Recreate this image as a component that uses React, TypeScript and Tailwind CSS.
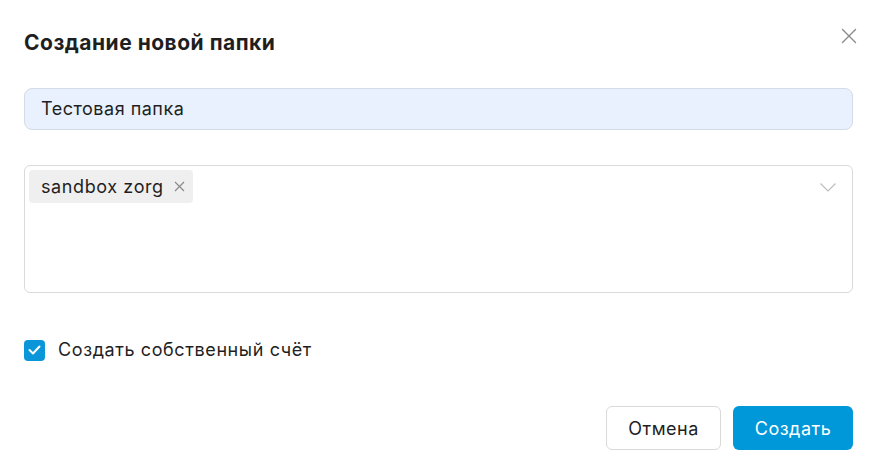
import { useState } from "react"

const font = { fontFamily: "Inter, 'Noto Sans', sans-serif" }

export default function App() {
  const [checked, setChecked] = useState(true)

  return (
    <div className="w-[883px] h-[474px] bg-white text-[#1f1f1f]" style={font}>
      <div className="pl-6 pr-[30px]">
        <div className="flex justify-between items-start pt-[28px]">
          <h2 className="mt-[3px] text-[21px] leading-[24px] font-bold tracking-[0.5px]">Создание новой папки</h2>
          <button className="-mr-[4px] text-[#8a8a8a]">
            <svg width="16" height="16" viewBox="0 0 16 16" fill="none" stroke="currentColor" strokeWidth="1.4" strokeLinecap="round">
              <path d="M1.5 1.5l13 13M14.5 1.5l-13 13" />
            </svg>
          </button>
        </div>

        <div className="mt-[33px] h-[42px] rounded-lg border border-[#d3dbe6] bg-[#e8f1fd] flex items-center px-4">
          <span className="text-[18px] leading-none tracking-[0.5px]">Тестовая папка</span>
        </div>

        <div className="mt-[35px] h-[128px] rounded-md border border-[#dadada] p-1 flex items-start justify-between">
          <div className="h-[33px] rounded bg-[#efefef] flex items-center pl-3 pr-2 gap-[10px]">
            <span className="text-[18px] leading-none tracking-[0.6px]">sandbox zorg</span>
            <svg width="11" height="11" viewBox="0 0 11 11" fill="none" stroke="#8a8a8a" strokeWidth="1.2">
              <path d="M1 1l9 9M10 1l-9 9" />
            </svg>
          </div>
          <svg className="mt-[13px] mr-[12px]" width="16" height="9" viewBox="0 0 16 9" fill="none" stroke="#bdbdbd" strokeWidth="1.2">
            <path d="M0.5 0.5l7.5 7.5 7.5-7.5" />
          </svg>
        </div>

        <label className="mt-[46px] flex items-center gap-[13px] h-[22px] cursor-pointer">
          <span
            onClick={() => setChecked(!checked)}
            className="w-[21px] h-[21px] rounded bg-[#0a96d8] flex items-center justify-center"
          >
            {checked && (
              <svg width="13" height="10" viewBox="0 0 13 10" fill="none" stroke="white" strokeWidth="2" strokeLinecap="round" strokeLinejoin="round">
                <path d="M1.5 5l3.5 3.5 6.5-7" />
              </svg>
            )}
          </span>
          <span className="text-[18px] leading-none tracking-[0.6px]">Создать собственный счёт</span>
        </label>

        <div className="mt-[45px] flex justify-end gap-3">
          <button className="h-[44px] w-[115px] rounded-md border border-[#d9d9d9] bg-white text-[18px] tracking-[0.5px]">Отмена</button>
          <button className="h-[44px] w-[120px] rounded-md bg-[#0098d8] text-white text-[18px] tracking-[0.5px]">Создать</button>
        </div>
      </div>
    </div>
  )
}
